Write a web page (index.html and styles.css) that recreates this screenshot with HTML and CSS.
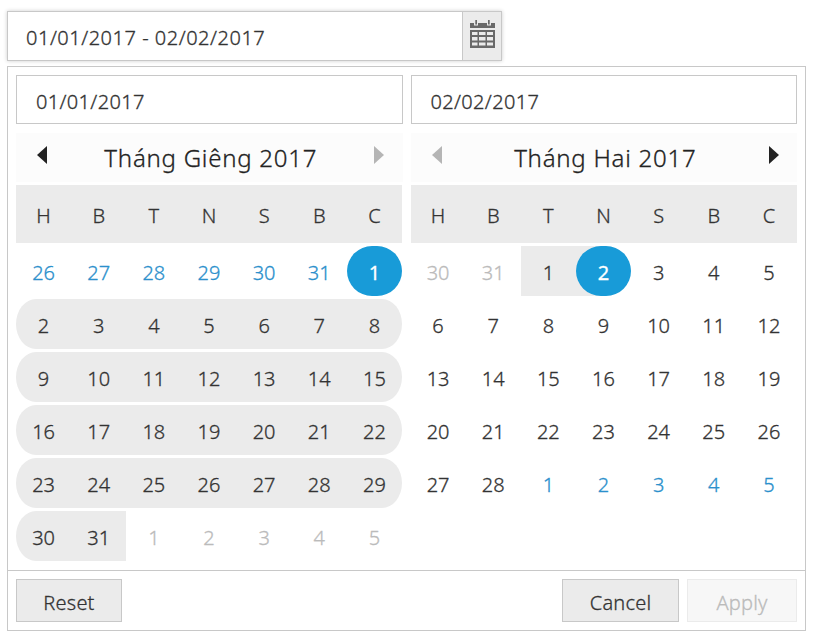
FILE: index.html
```html
<!DOCTYPE html>
<html lang="vi">
<head>
<meta charset="utf-8">
<title>Date range picker</title>
<link rel="stylesheet" href="styles.css">
</head>
<body>
<div class="range-field">
  <span class="range-value">01/01/2017 - 02/02/2017</span>
  <span class="range-button">
    <svg class="calendar-icon" width="26" height="30" viewBox="0 0 26 30" fill="#696969">
      <path d="M0 3h4v2.5h4V3h9v2.5h4V3h4v5H0zM5.3 0h1.7v4.5H5.3zM18 0h1.7v4.5H18z"/>
      <path fill-rule="evenodd" d="M0 10h25v18H0zM2 12v3h5.5v-3zM9 12v3h6.5v-3zM17 12v3h6v-3zM2 17v3.5h5.5v-3.5zM9 17v3.5h6.5v-3.5zM17 17v3.5h6v-3.5zM2 22.5v3h5.5v-3zM9 22.5v3h6.5v-3zM17 22.5v3h6v-3z"/>
    </svg>
  </span>
</div>
<div class="popup">
  <div class="calendars">
    <section class="calendar">
      <div class="date-input">01/01/2017</div>
      <div class="title-bar">
        <svg class="arrow" width="10" height="18" viewBox="0 0 10 18"><path d="M10 0v18L0 9z"/></svg>
        <span class="title">Tháng Giêng 2017</span>
        <svg class="arrow disabled" width="10" height="18" viewBox="0 0 10 18"><path d="M0 0v18L10 9z"/></svg>
      </div>
      <div class="weekdays"><span>H</span><span>B</span><span>T</span><span>N</span><span>S</span><span>B</span><span>C</span></div>
      <div class="week"><span class="adjacent">26</span><span class="adjacent">27</span><span class="adjacent">28</span><span class="adjacent">29</span><span class="adjacent">30</span><span class="adjacent">31</span><span class="selected">1</span></div>
      <div class="week full"><span>2</span><span>3</span><span>4</span><span>5</span><span>6</span><span>7</span><span>8</span></div>
      <div class="week full"><span>9</span><span>10</span><span>11</span><span>12</span><span>13</span><span>14</span><span>15</span></div>
      <div class="week full"><span>16</span><span>17</span><span>18</span><span>19</span><span>20</span><span>21</span><span>22</span></div>
      <div class="week full"><span>23</span><span>24</span><span>25</span><span>26</span><span>27</span><span>28</span><span>29</span></div>
      <div class="week"><span class="in-range row-start">30</span><span class="in-range">31</span><span class="muted">1</span><span class="muted">2</span><span class="muted">3</span><span class="muted">4</span><span class="muted">5</span></div>
    </section>
    <section class="calendar">
      <div class="date-input">02/02/2017</div>
      <div class="title-bar">
        <svg class="arrow disabled" width="10" height="18" viewBox="0 0 10 18"><path d="M10 0v18L0 9z"/></svg>
        <span class="title">Tháng Hai 2017</span>
        <svg class="arrow" width="10" height="18" viewBox="0 0 10 18"><path d="M0 0v18L10 9z"/></svg>
      </div>
      <div class="weekdays"><span>H</span><span>B</span><span>T</span><span>N</span><span>S</span><span>B</span><span>C</span></div>
      <div class="week"><span class="muted">30</span><span class="muted">31</span><span class="in-range">1</span><span class="selected range-end">2</span><span>3</span><span>4</span><span>5</span></div>
      <div class="week"><span>6</span><span>7</span><span>8</span><span>9</span><span>10</span><span>11</span><span>12</span></div>
      <div class="week"><span>13</span><span>14</span><span>15</span><span>16</span><span>17</span><span>18</span><span>19</span></div>
      <div class="week"><span>20</span><span>21</span><span>22</span><span>23</span><span>24</span><span>25</span><span>26</span></div>
      <div class="week"><span>27</span><span>28</span><span class="adjacent">1</span><span class="adjacent">2</span><span class="adjacent">3</span><span class="adjacent">4</span><span class="adjacent">5</span></div>
    </section>
  </div>
  <div class="footer">
    <div class="button reset">Reset</div>
    <div class="button cancel">Cancel</div>
    <div class="button apply">Apply</div>
  </div>
</div>
</body>
</html>
```
FILE: styles.css
```css
* { box-sizing: border-box; }
body {
  margin: 0;
  padding: 11px 0 0 7px;
  background: #fff;
  color: #333;
  font: 300 20px "Noto Sans", "Open Sans", sans-serif;
  -webkit-text-stroke: .3px currentColor;
}
.range-field {
  display: flex;
  width: 495px;
  height: 50px;
  border: 1px solid #c8c8c8;
  box-shadow: 0 0 4px rgba(0, 0, 0, .2);
}
.range-value {
  flex: 1;
  padding-left: 18px;
  line-height: 52px;
  letter-spacing: .52px;
}
.range-button {
  width: 39px;
  border-left: 1px solid #c8c8c8;
  background: #ebebeb;
  padding: 8px 0 0 7px;
}
.calendar-icon { display: block; }
.popup {
  width: 799px;
  height: 565px;
  margin-top: 5px;
  border: 1px solid #c8c8c8;
}
.calendars {
  display: flex;
  gap: 8px;
  height: 503px;
  padding: 8px 8px 0;
}
.calendar { flex: 1; }
.date-input {
  height: 49px;
  border: 1px solid #c8c8c8;
  padding-left: 19px;
  line-height: 51px;
  letter-spacing: .35px;
}
.title-bar {
  display: flex;
  justify-content: space-between;
  height: 49px;
  margin: 9px 0 3px;
  padding: 13px 18px 0 21px;
  background: #fcfcfc;
}
.title {
  color: #222;
  font-size: 24px;
  line-height: 24px;
  letter-spacing: .75px;
}
.arrow { fill: #222; }
.arrow.disabled { fill: #b5b5b5; }
.weekdays, .week {
  display: grid;
  grid-template-columns: repeat(7, 1fr);
  width: 386px;
  text-align: center;
}
.weekdays {
  height: 58px;
  line-height: 62px;
  background: #ebebeb;
}
.week {
  height: 50px;
  margin-top: 3px;
  line-height: 54px;
}
.week span { height: 50px; }
.full {
  border-radius: 20px / 25px;
  background: #ebebeb;
}
.in-range { background: #ebebeb; }
.row-start { border-radius: 20px 0 0 20px / 25px 0 0 25px; }
.adjacent { color: #2b90cc; }
.muted { color: #bbb; }
.selected {
  border-radius: 25px;
  background: #189bd8;
  color: #fff;
  font-weight: 400;
}
.range-end {
  position: relative;
}
.range-end::before {
  content: "";
  position: absolute;
  z-index: -1;
  inset: 0 50% 0 0;
  background: #ebebeb;
}
.footer {
  display: flex;
  gap: 8px;
  border-top: 1px solid #c8c8c8;
  padding: 8px;
}
.button {
  height: 43px;
  border: 1px solid #c8c8c8;
  background: #ebebeb;
  line-height: 46px;
  text-align: center;
  letter-spacing: .2px;
}
.reset { width: 106px; margin-right: auto; }
.cancel { width: 117px; }
.apply {
  width: 110px;
  border-color: #ebebeb;
  background: #f7f7f7;
  color: #bbb;
}
```
